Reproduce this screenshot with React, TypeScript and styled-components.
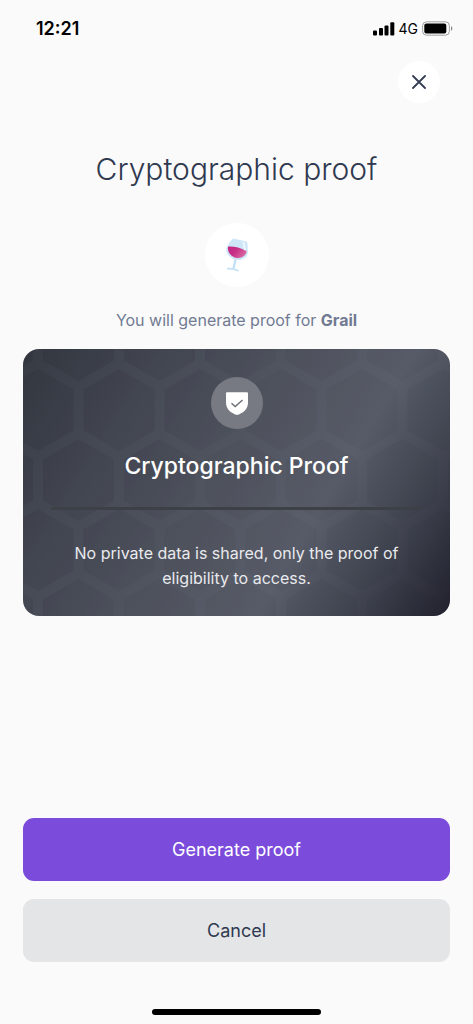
import React from "react";
import styled, { createGlobalStyle } from "styled-components";

const GlobalStyle = createGlobalStyle`
  *, *::before, *::after { box-sizing: border-box; }
  body {
    margin: 0;
    background: #fafafa;
    color: #2f3950;
    font-family: Inter, "Liberation Sans", sans-serif;
  }
  h1, h2, p { margin: 0; font-weight: 400; }
  button { border: 0; font: inherit; color: inherit; cursor: pointer; }
  svg { display: block; }
`;

const Screen = styled.div`
  min-height: 100vh;
  display: flex;
  flex-direction: column;
`;

const StatusBar = styled.header`
  display: flex;
  align-items: center;
  justify-content: space-between;
  height: 57px;
  padding: 0 20px 0 36px;
  color: #000;
`;

const Clock = styled.time`
  font-size: 18px;
  font-weight: 600;
  line-height: 24px;
`;

const Indicators = styled.div`
  display: flex;
  align-items: center;
  gap: 4px;
  font-size: 14px;
  font-weight: 400;
  line-height: 24px;
`;

const TopBar = styled.nav`
  display: flex;
  justify-content: flex-end;
  padding: 4px 33px 0;
`;

const CloseButton = styled.button`
  display: grid;
  place-items: center;
  width: 42px;
  height: 42px;
  padding: 0;
  border-radius: 50%;
  background: #fff;
`;

const Content = styled.main`
  flex: 1;
  display: flex;
  flex-direction: column;
  align-items: center;
  padding: 46px 23px 24px;
  text-align: center;
`;

const Title = styled.h1`
  font-size: 30px;
  font-weight: 350;
  line-height: 40px;
`;

const Avatar = styled.div`
  display: grid;
  place-items: center;
  width: 64px;
  height: 64px;
  margin-top: 34px;
  border-radius: 50%;
  background: #fff;
`;

const Subtitle = styled.p`
  margin-top: 21px;
  font-size: 16px;
  line-height: 24px;
  color: #717a93;

  strong { font-weight: 700; }
`;

const Card = styled.section`
  position: relative;
  overflow: hidden;
  display: flex;
  flex-direction: column;
  align-items: center;
  width: 100%;
  margin-top: 17px;
  padding: 28px 28px 25px;
  border-radius: 16px;
  background: linear-gradient(121deg, #363a43 0%, #454954 22%, #50545f 45%, #5a5e6b 67%, #3c3f4b 86%, #21212d 100%);
  color: #fff;

  > * { position: relative; }
`;

const HexBackdrop = styled.svg`
  && {
    position: absolute;
    inset: 0;
  }
  width: 100%;
  height: 100%;
`;

const Badge = styled.div`
  display: grid;
  place-items: center;
  width: 52px;
  height: 52px;
  border-radius: 50%;
  background: #777a82;
`;

const CardTitle = styled.h2`
  margin-top: 21px;
  font-size: 23px;
  font-weight: 500;
  line-height: 32px;
`;

const Divider = styled.hr`
  align-self: stretch;
  height: 3px;
  margin: 25px 0 31px;
  border: 0;
  background: #3d4044;
`;

const CardText = styled.p`
  max-width: 340px;
  font-size: 16px;
  line-height: 25px;
  color: #e9eaee;
`;

const Actions = styled.footer`
  display: flex;
  flex-direction: column;
  gap: 18px;
  padding: 0 23px;
`;

const ActionButton = styled.button<{ $primary?: boolean }>`
  height: 63px;
  border-radius: 11px;
  font-size: 18px;
  line-height: 24px;
  background: ${({ $primary }) => ($primary ? "#7b4bdb" : "#e4e5e7")};
  color: ${({ $primary }) => ($primary ? "#fff" : "#2f3950")};
`;

const HomeIndicator = styled.div`
  align-self: center;
  width: 169px;
  height: 6px;
  margin: 47px 0 9px;
  border-radius: 3px;
  background: #000;
`;

const SignalIcon = () => (
  <svg width="22" height="14" viewBox="0 0 22 14" aria-hidden="true">
    <rect x="0" y="8.5" width="4" height="5" rx="1" />
    <rect x="6" y="6" width="4" height="7.5" rx="1" />
    <rect x="11.5" y="3.5" width="4" height="10" rx="1" />
    <rect x="17.3" y="0.3" width="4" height="13.2" rx="1" />
  </svg>
);

const BatteryIcon = () => (
  <svg width="31" height="15" viewBox="0 0 31 15" aria-hidden="true">
    <rect x="0.6" y="0.8" width="26.8" height="13.4" rx="4" fill="none" stroke="#a0a0a0" />
    <rect x="2.3" y="2.5" width="22" height="10" rx="2" />
    <path d="M29 5.2c1.8.7 1.8 3.9 0 4.6z" fill="#8a8a8a" />
  </svg>
);

const CloseIcon = () => (
  <svg width="14" height="14" viewBox="0 0 14 14" aria-hidden="true">
    <path d="M1 1l12 12M13 1L1 13" stroke="#343d53" strokeWidth="1.8" strokeLinecap="round" />
  </svg>
);

const WineIcon = () => (
  <svg width="24" height="34" viewBox="0 0 24 34" aria-hidden="true">
    <defs>
      <linearGradient id="wine" x1="0" y1="0" x2="1" y2="0.5">
        <stop offset="0" stopColor="#c32383" />
        <stop offset="0.5" stopColor="#c83288" />
        <stop offset="1" stopColor="#d9679f" />
      </linearGradient>
    </defs>
    <path d="M10.5 21.5L8.3 31.5" stroke="#c0dff4" strokeWidth="2.2" />
    <path d="M2.800 30.700c3-.2 7.500.5 10 1.800" fill="none" stroke="#c4e2f6" strokeWidth="1.8" strokeLinecap="round" />
    <path d="M8.300.5L21.500 3.600C22.200 3.800 22.500 5 22.600 7l.2 8c-.6 4.600-6 7.700-11.200 6.900C5.500 21 1.200 16.200 1.300 11.500 1.400 8.500 5.500 2.500 8.300.5z" fill="#cde6f8" />
    <path d="M3 8.700C8.500 8.200 15 9.700 21.500 12.900c.4 4-4.500 7.600-10 7.100C6.500 18.800 2.100 14.500 3 8.700z" fill="url(#wine)" />
    <path d="M18.600 4.600L19.800 11.500" stroke="#f3faff" strokeWidth="1.6" strokeLinecap="round" />
  </svg>
);

const ShieldIcon = () => (
  <svg width="24" height="26" viewBox="0 0 24 26" aria-hidden="true">
    <path d="M2.300 2.200h19.400c.8 0 1.300.5 1.300 1.300v9c0 6.500-4.500 10.500-11 12.500-6.500-2-11-6-11-12.500V3.500c0-.8.5-1.300 1.300-1.300z" fill="#fff" />
    <path d="M6.500 13.200l3.700 3.300 7.300-6.500" fill="none" stroke="#6b6e76" strokeWidth="1.4" />
  </svg>
);

const HEX = "l35.5 20.5v41l-35.5 20.5l-35.5-20.5v-41z";

const HexPattern = () => (
  <HexBackdrop aria-hidden="true">
    <defs>
      <pattern id="hexes" x="15" y="20" width="81" height="140" patternUnits="userSpaceOnUse">
        <path d={`M0 0${HEX}M81 0${HEX}M40.5 70${HEX}M40.5 -70${HEX}`} fill="#1c1e28" />
      </pattern>
      <linearGradient id="fade" x1="0" y1="0" x2="1" y2="0.4">
        <stop offset="0" stopColor="#fff" stopOpacity="0.14" />
        <stop offset="0.5" stopColor="#fff" stopOpacity="0.06" />
        <stop offset="1" stopColor="#fff" stopOpacity="0.05" />
      </linearGradient>
      <mask id="hexMask">
        <rect width="100%" height="100%" fill="url(#fade)" />
      </mask>
    </defs>
    <rect width="100%" height="100%" fill="url(#hexes)" mask="url(#hexMask)" />
  </HexBackdrop>
);

export default function App() {
  return (
    <>
      <GlobalStyle />
      <Screen>
        <StatusBar>
          <Clock>12:21</Clock>
          <Indicators>
            <SignalIcon />
            <span>4G</span>
            <BatteryIcon />
          </Indicators>
        </StatusBar>
        <TopBar>
          <CloseButton type="button" aria-label="Close">
            <CloseIcon />
          </CloseButton>
        </TopBar>
        <Content>
          <Title>Cryptographic proof</Title>
          <Avatar>
            <WineIcon />
          </Avatar>
          <Subtitle>
            You will generate proof for <strong>Grail</strong>
          </Subtitle>
          <Card>
            <HexPattern />
            <Badge>
              <ShieldIcon />
            </Badge>
            <CardTitle>Cryptographic Proof</CardTitle>
            <Divider />
            <CardText>No private data is shared, only the proof of eligibility to access.</CardText>
          </Card>
        </Content>
        <Actions>
          <ActionButton type="button" $primary>
            Generate proof
          </ActionButton>
          <ActionButton type="button">Cancel</ActionButton>
        </Actions>
        <HomeIndicator />
      </Screen>
    </>
  );
}
